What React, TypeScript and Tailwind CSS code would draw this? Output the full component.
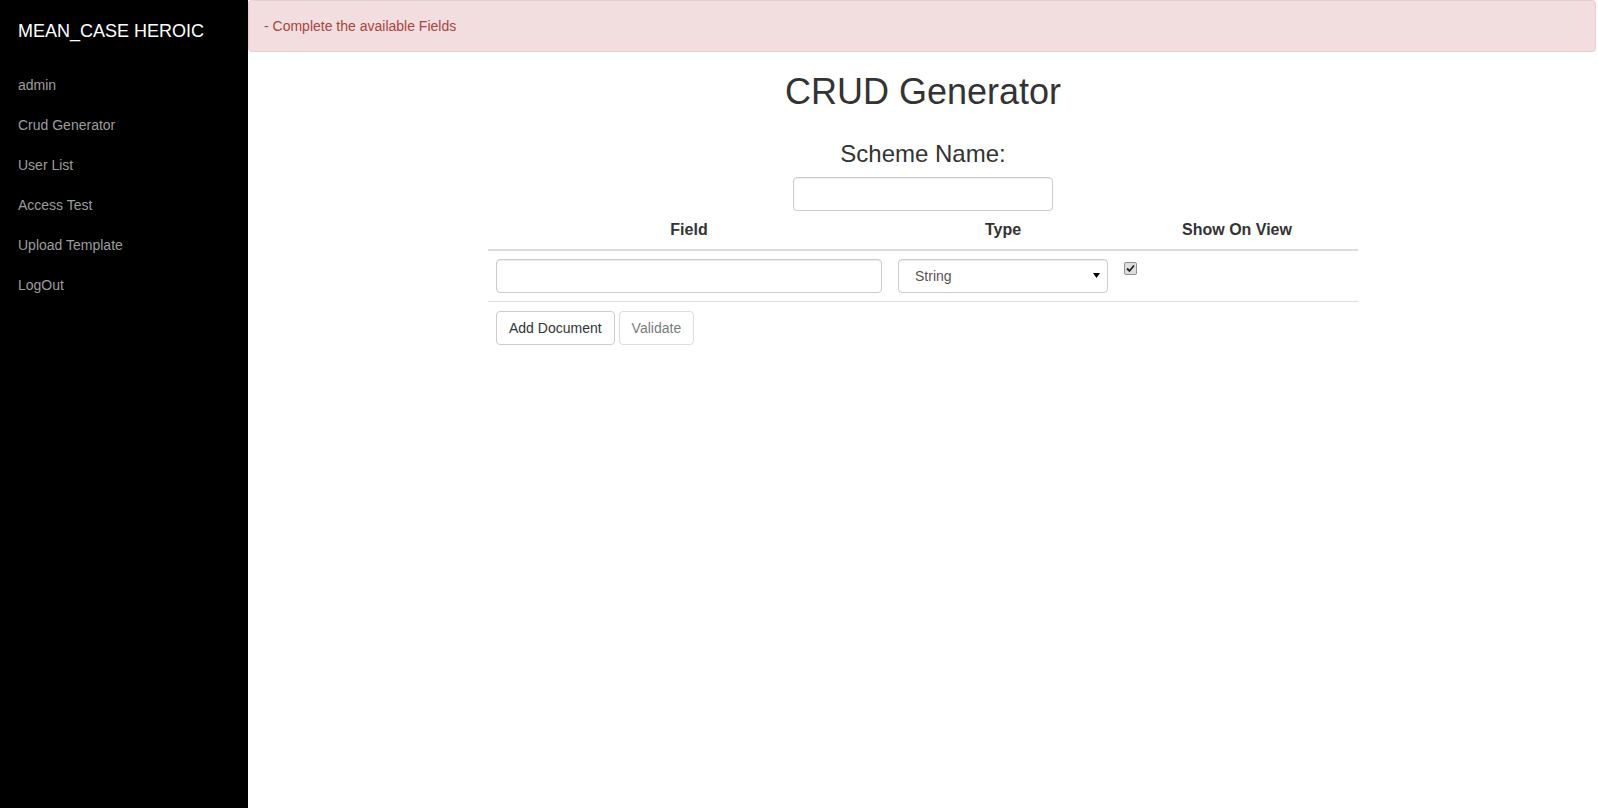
export default function App() {
  const navItems = ['admin', 'Crud Generator', 'User List', 'Access Test', 'Upload Template', 'LogOut'];

  return (
    <div className="flex h-screen w-full bg-white font-['Liberation_Sans',Arial,sans-serif] text-[14px] text-[#333]">
      {/* sidebar */}
      <aside className="w-[248px] shrink-0 bg-black">
        <div className="h-[65px] pl-[18px] pt-[21px] text-[18px] leading-[20px] text-white">MEAN_CASE HEROIC</div>
        <ul>
          {navItems.map((item) => (
            <li key={item}>
              <a href="#" className="block py-[10px] pl-[18px] leading-[20px] text-[#9d9d9d]">
                {item}
              </a>
            </li>
          ))}
        </ul>
      </aside>

      {/* main */}
      <main className="flex-1">
        <div className="mr-[2px] h-[52px] rounded-[4px] border border-[#ebccd1] bg-[#f2dede] px-[15px] pt-[15px] leading-[20px] text-[#a94442]">
          - Complete the available Fields
        </div>

        <div className="mx-auto w-[870px]">
          <h1 className="mt-[20px] text-center text-[36px] leading-[40px]">CRUD Generator</h1>
          <h3 className="mt-[29px] text-center text-[24px] leading-[26px]">Scheme Name:</h3>
          <div className="mt-[10px] flex justify-center">
            <input
              type="text"
              className="h-[34px] w-[260px] rounded-[4px] border border-[#ccc] px-[12px] shadow-[inset_0_1px_1px_rgba(0,0,0,0.075)] outline-none"
            />
          </div>

          <table className="w-full table-fixed">
            <thead>
              <tr className="border-b-2 border-[#ddd]">
                <th className="w-[402px] p-[8px] text-center text-[16px] leading-[22px] font-bold">Field</th>
                <th className="w-[226px] p-[8px] text-center text-[16px] leading-[22px] font-bold">Type</th>
                <th className="p-[8px] text-center text-[16px] leading-[22px] font-bold">Show On View</th>
              </tr>
            </thead>
            <tbody>
              <tr className="border-b border-[#ddd]">
                <td className="p-[8px] align-top">
                  <input
                    type="text"
                    className="block h-[34px] w-full rounded-[4px] border border-[#ccc] px-[12px] shadow-[inset_0_1px_1px_rgba(0,0,0,0.075)] outline-none"
                  />
                </td>
                <td className="p-[8px] align-top">
                  <div className="relative">
                    <select
                      defaultValue="String"
                      className="block h-[34px] w-full appearance-none rounded-[4px] border border-[#ccc] bg-white pl-[16px] text-[#555] shadow-[inset_0_1px_1px_rgba(0,0,0,0.075)] outline-none"
                    >
                      <option>String</option>
                      <option>Number</option>
                      <option>Date</option>
                      <option>Boolean</option>
                    </select>
                    <svg className="pointer-events-none absolute right-[8px] top-[14px]" width="7" height="5" viewBox="0 0 7 5">
                      <path d="M0 0 L7 0 L3.5 5 Z" fill="#000" />
                    </svg>
                  </div>
                </td>
                <td className="p-[8px] align-top">
                  <label className="relative mt-[3px] block h-[13px] w-[13px]">
                    <input
                      type="checkbox"
                      defaultChecked
                      className="block h-[13px] w-[13px] appearance-none rounded-[2px] border border-[#8e8f8f] bg-[#dedede]"
                    />
                    <svg className="pointer-events-none absolute left-[2px] top-[2px]" width="9" height="9" viewBox="0 0 9 9">
                      <path d="M1 4.5 L3.5 7 L8 1.5" stroke="#222" strokeWidth="1.8" fill="none" />
                    </svg>
                  </label>
                </td>
              </tr>
            </tbody>
          </table>

          <div className="mt-[9px] flex gap-[4px] pl-[8px]">
            <button className="h-[34px] rounded-[4px] border border-[#ccc] bg-white px-[12px] leading-[20px] text-[#333]">
              Add Document
            </button>
            <button disabled className="h-[34px] rounded-[4px] border border-[#ccc] bg-white px-[12px] leading-[20px] text-[#333] opacity-65">
              Validate
            </button>
          </div>
        </div>
      </main>
    </div>
  );
}
